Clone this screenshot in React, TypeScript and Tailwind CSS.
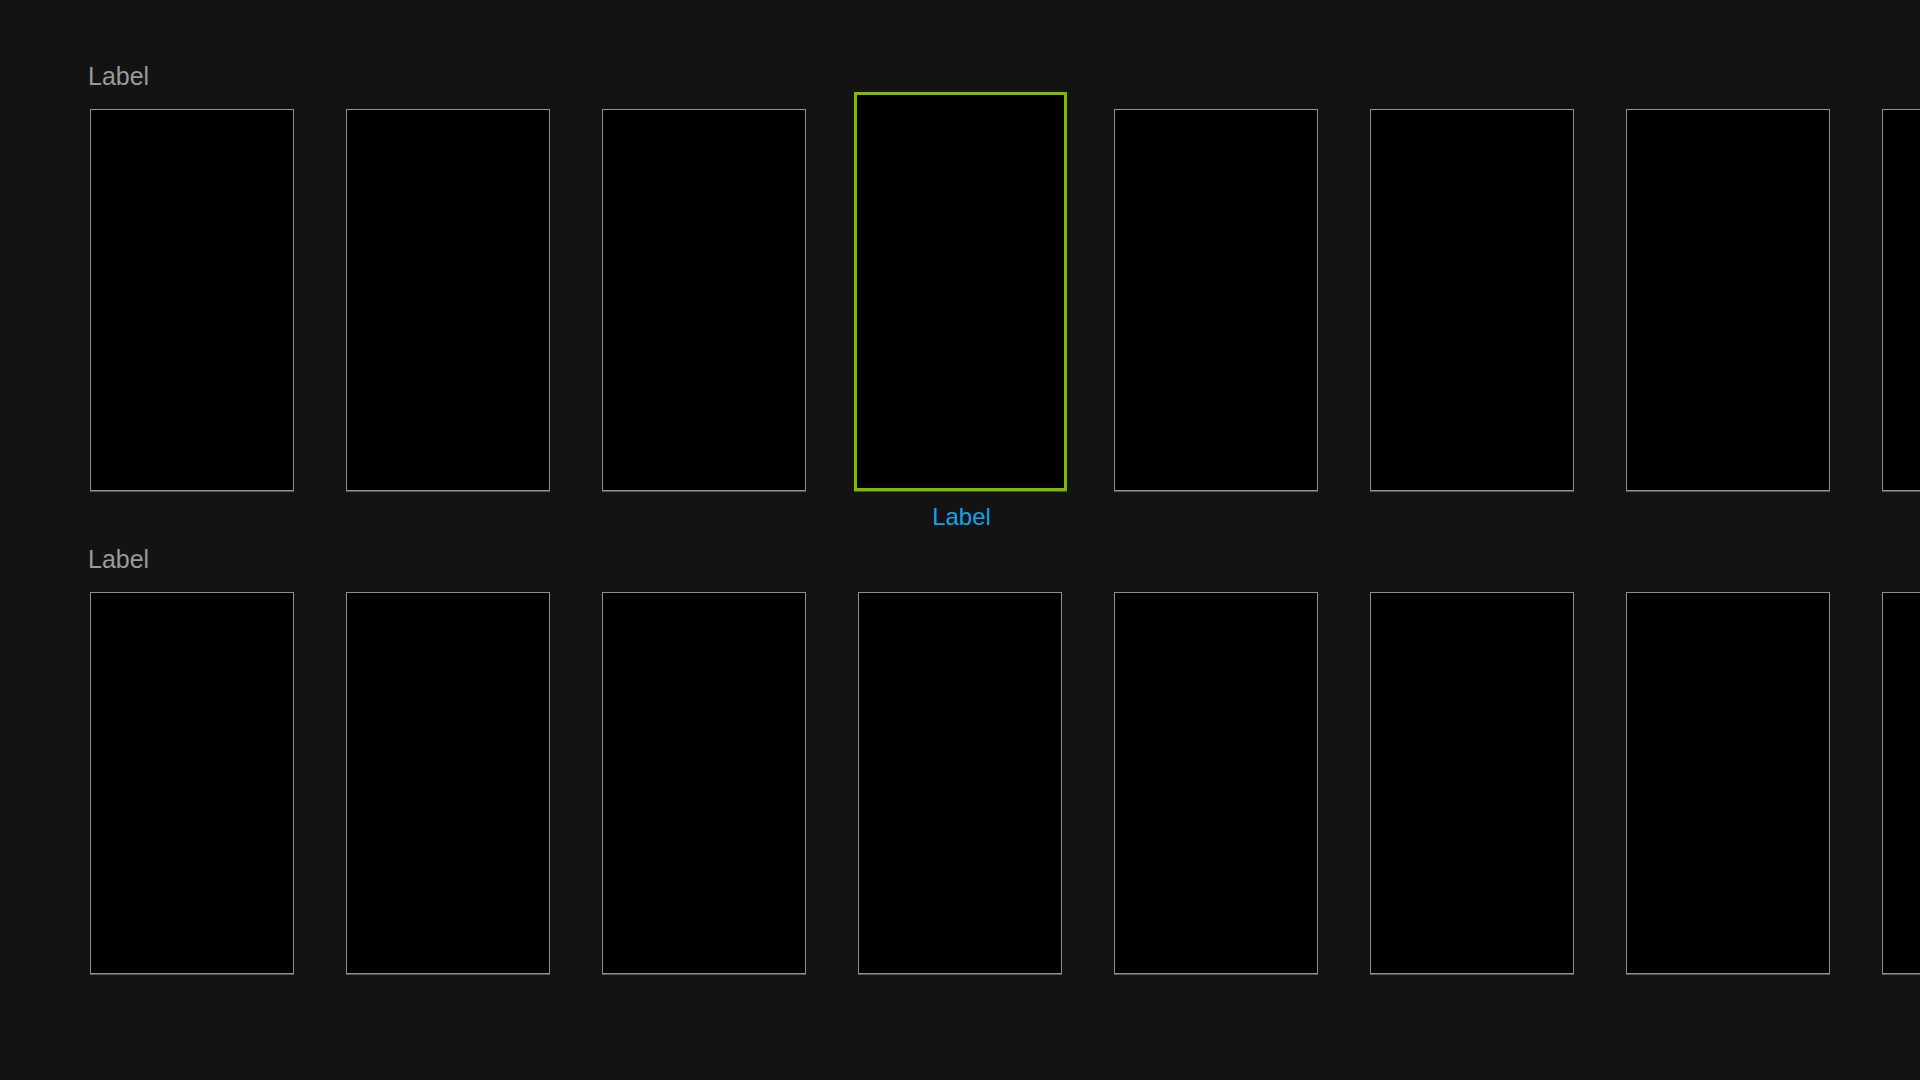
import React from "react";

const font = { fontFamily: '"Liberation Sans", Arial, Helvetica, sans-serif' };

function Card({ focused }: { focused?: boolean }) {
  if (focused) {
    return (
      <div className="-mt-[17px] -mx-[4.5px] h-[399px] w-[213px] border-[3px] border-[#80bb00] bg-black shadow-[0_1px_0_#3f5c0a]" />
    );
  }
  return <div className="h-[382px] w-[204px] border border-[#8f8f8f] bg-black shadow-[0_1px_0_#555555]" />;
}

function Row({ focusIndex, caption }: { focusIndex?: number; caption?: string }) {
  const items = Array.from({ length: 8 }, (_, i) => i);
  return (
    <div className="flex flex-col">
      <div className="pl-[88px] text-[25px] leading-[25px] text-[#9a9a9a]">Label</div>
      <div className="mt-[20px] flex items-start gap-[52px] pl-[90px]">
        {items.map((i) => (
          <div key={i} className="flex w-[204px] shrink-0 flex-col items-center">
            <Card focused={i === focusIndex} />
            {i === focusIndex && caption ? (
              <div className="mt-[14px] pl-[3px] text-[24px] leading-[24px] text-[#12a4e3]">{caption}</div>
            ) : null}
          </div>
        ))}
      </div>
    </div>
  );
}

export default function App() {
  return (
    <div className="h-[1080px] w-[1920px] overflow-hidden bg-[#131313]" style={font}>
      <div className="flex flex-col pt-[64px]">
        <Row focusIndex={3} caption="Label" />
        <div className="mt-[18px]">
          <Row />
        </div>
      </div>
    </div>
  );
}
